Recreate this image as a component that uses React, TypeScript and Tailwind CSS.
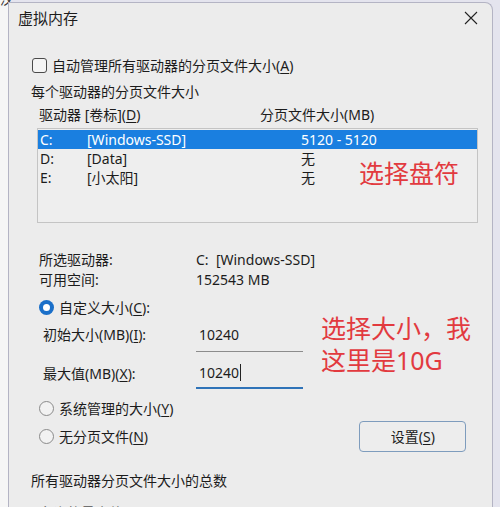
import React from 'react';

const font = { fontFamily: '"Noto Sans", "Noto Sans CJK SC", sans-serif' };

function Key({ k }: { k: string }) {
  return (
    <>
      (<span className="underline underline-offset-2">{k}</span>)
    </>
  );
}

function Radio({ checked }: { checked?: boolean }) {
  if (checked) {
    return (
      <span className="flex h-[15px] w-[15px] items-center justify-center rounded-full bg-[#1a6fc9]">
        <span className="h-[7px] w-[7px] rounded-full bg-white" />
      </span>
    );
  }
  return <span className="h-[15px] w-[15px] rounded-full border border-[#8a8a8a] bg-[#f2f2f2]" />;
}

const drives = [
  { d: 'C:', label: '[Windows-SSD]', size: '5120 - 5120', selected: true },
  { d: 'D:', label: '[Data]', size: '无' },
  { d: 'E:', label: '[小太阳]', size: '无' },
];

export default function App() {
  return (
    <div
      className="relative h-[507px] w-[500px] overflow-hidden bg-[#e4e4ee] text-[14px] text-[#1c1c1c]"
      style={font}
    >
      <div className="flex h-full">
        {/* window behind */}
        <div className="h-full w-[8px] bg-[#f6f6f6]">
          <div className="-mt-[9px] text-[14px] leading-[16px] text-[#333]">汉</div>
        </div>

        {/* dialog */}
        <div className="mt-[2px] flex h-[520px] w-[485px] flex-col rounded-tr-[8px] border-l border-r border-t border-[#b4b4c4] bg-[#ececec]">
          {/* title bar */}
          <div className="flex h-[32px] items-center justify-between pl-[9px] pr-[14px]">
            <span className="text-[15px]">虚拟内存</span>
            <svg width="14" height="14" viewBox="0 0 14 14">
              <path d="M1 1 L13 13 M13 1 L1 13" stroke="#222" strokeWidth="1.1" fill="none" />
            </svg>
          </div>

          {/* auto manage */}
          <div className="ml-[23px] mt-[22px] flex h-[20px] items-center gap-[5px]">
            <span className="h-[15px] w-[15px] rounded-[3px] border border-[#4a4a4a] bg-[#f4f4f4]" />
            <span>
              自动管理所有驱动器的分页文件大小<Key k="A" />
            </span>
          </div>

          <div className="ml-[22px] mt-[6px] flex h-[20px] items-center">每个驱动器的分页文件大小</div>

          <div className="ml-[30px] mt-[3px] flex h-[20px] items-center">
            <span className="w-[221px]">
              驱动器 [卷标]<Key k="D" />
            </span>
            <span>分页文件大小(MB)</span>
          </div>

          {/* list box */}
          <div className="ml-[28px] mt-[3px] h-[100px] w-[441px] border border-[#c4c4c4] bg-[#eeeeee] pt-[1px]">
            <div className="flex flex-col">
              {drives.map((r) => (
                <div
                  key={r.d}
                  className={`flex h-[19px] w-[439px] items-center leading-[19px] ${
                    r.selected ? 'bg-[#1a7fe0] text-white' : ''
                  }`}
                >
                  <span className="w-[49px] pl-[2px]">{r.d}</span>
                  <span className="w-[214px]">{r.label}</span>
                  <span>{r.size}</span>
                </div>
              ))}
            </div>
            <div className="-mt-[29px] ml-[321px] text-[25px] leading-[30px] text-[#e23a3f]">选择盘符</div>
          </div>

          {/* selected drive info */}
          <div className="ml-[30px] mt-[26px] flex h-[20px] items-center">
            <span className="w-[157px]">所选驱动器:</span>
            <span>C:&nbsp; [Windows-SSD]</span>
          </div>
          <div className="ml-[30px] flex h-[20px] items-center">
            <span className="w-[157px]">可用空间:</span>
            <span>152543 MB</span>
          </div>

          <div className="ml-[30px] mt-[8px] flex h-[20px] items-center gap-[5px]">
            <Radio checked />
            <span>
              自定义大小<Key k="C" />:
            </span>
          </div>

          {/* sizes */}
          <div className="flex">
            <div className="ml-[34px] flex w-[153px] flex-col">
              <div className="flex h-[34px] items-center pt-[1px]">
                初始大小(MB)<Key k="I" />:
              </div>
              <div className="flex h-[38px] items-center pt-[6px]">
                最大值(MB)<Key k="X" />:
              </div>
            </div>
            <div className="flex w-[107px] flex-col">
              <div className="flex h-[35px] items-center border-b border-[#8c8c8c] pl-[3px] pt-[1px]">10240</div>
              <div className="flex h-[37px] items-center border-b-2 border-[#2f73b8] pl-[3px] pt-[6px]">
                10240<span className="ml-[1px] h-[17px] w-[1px] bg-[#222]" />
              </div>
            </div>
            <div className="ml-[18px] -mt-[5px] text-[25px] leading-[32px] text-[#e23a3f]">
              <div>选择大小，我</div>
              <div>这里是10G</div>
            </div>
          </div>

          {/* other options + button */}
          <div className="flex">
            <div className="flex flex-col">
              <div className="ml-[30px] mt-[9px] flex h-[20px] items-center gap-[5px]">
                <Radio />
                <span>
                  系统管理的大小<Key k="Y" />
                </span>
              </div>
              <div className="ml-[30px] mt-[8px] flex h-[20px] items-center gap-[5px]">
                <Radio />
                <span>
                  无分页文件<Key k="N" />
                </span>
              </div>
            </div>
            <button className="ml-[186px] mt-[32px] flex h-[31px] w-[107px] items-center justify-center rounded-[4px] border border-[#7e9cbd] bg-[#ededed]">
              设置<Key k="S" />
            </button>
          </div>

          <div className="ml-[22px] mt-[18px] flex h-[20px] items-center">所有驱动器分页文件大小的总数</div>
          <div className="ml-[30px] mt-[12px] flex h-[20px] items-center text-[#555]">
            <span className="w-[157px]">允许的最小值:</span>
            <span>16 MB</span>
          </div>
        </div>
      </div>
    </div>
  );
}
